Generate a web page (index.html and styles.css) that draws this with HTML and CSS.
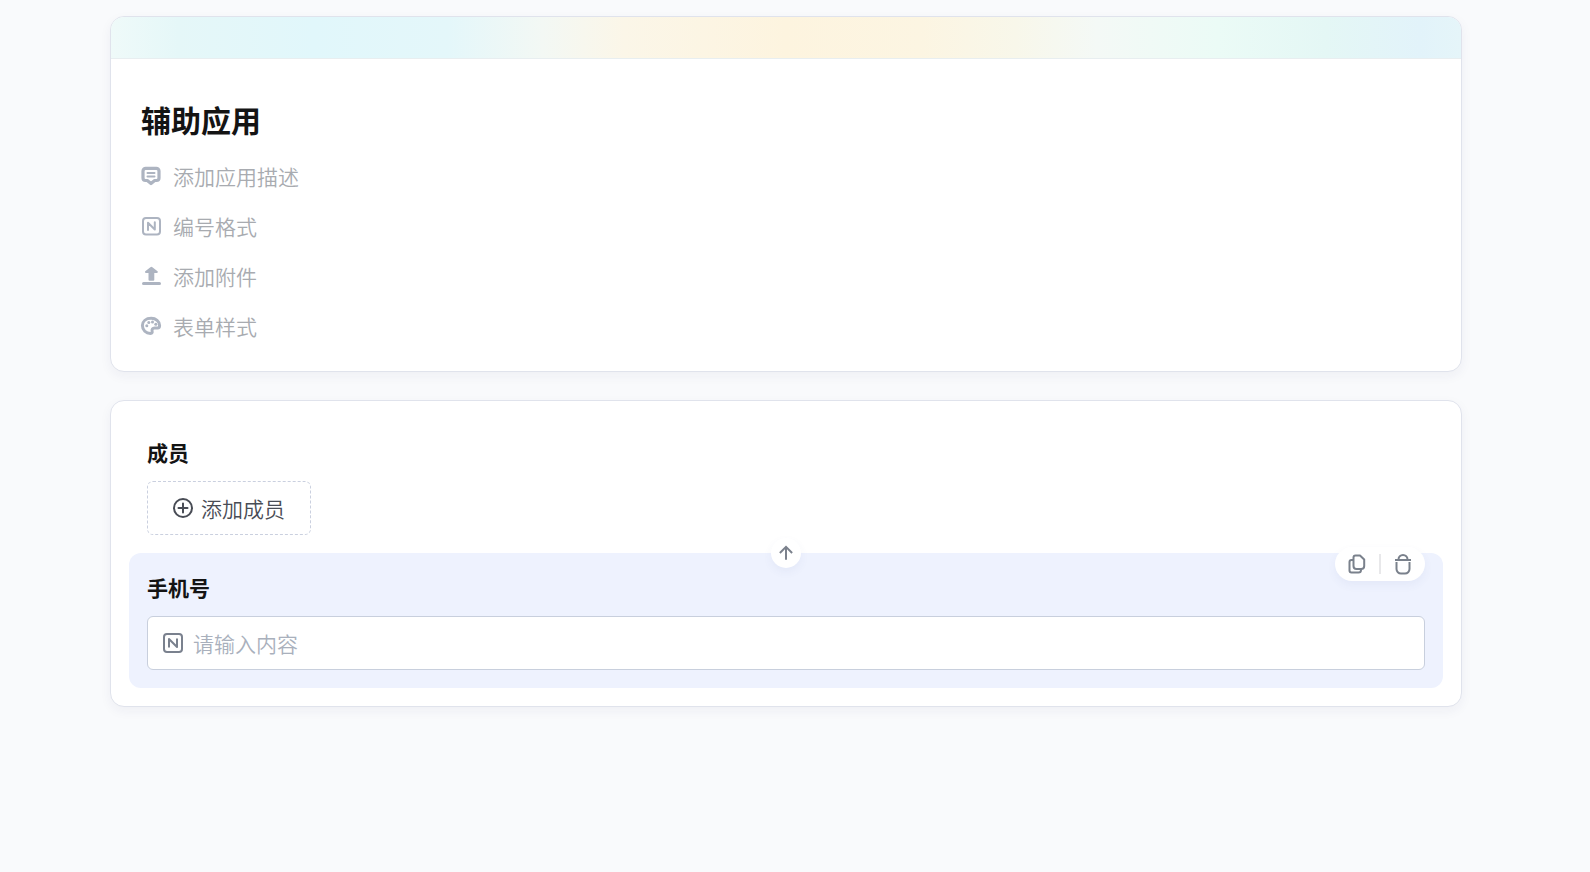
FILE: index.html
```html
<!DOCTYPE html>
<html lang="zh-CN">
<head>
  <meta charset="UTF-8" />
  <title>辅助应用</title>
  <link rel="stylesheet" href="styles.css">
</head>
<body>

  <main class="page">
    <section class="card">
      <div class="banner"></div>
      <div class="app-info">
        <h1>辅助应用</h1>
        <button type="button" class="option">
          <svg class="icon" viewBox="0 0 20 20">
            <path d="M5 2.300h10A2.700 2.700 0 0 1 18 5v7a2.500 2.500 0 0 1-2.500 2.500h-1.800L10 17.500l-3.700-3H4.500A2.500 2.500 0 0 1 2 12V5a2.700 2.700 0 0 1 3-2.700z" fill="none" stroke="currentColor" stroke-width="3.200" stroke-linejoin="round"/>
            <path d="M6.500 7h7M6.500 10.500h7" stroke="currentColor" stroke-width="2" stroke-linecap="round"/>
          </svg>
          添加应用描述
        </button>
        <button type="button" class="option">
          <svg class="icon" viewBox="0 0 20 20" fill="none" stroke="currentColor" stroke-width="2" stroke-linejoin="round">
            <rect x="2" y="2" width="17" height="16.500" rx="3"/>
            <path d="M7 14V6.800l6.800 6.700V6.300" stroke-linecap="round"/>
          </svg>
          编号格式
        </button>
        <button type="button" class="option">
          <svg class="icon" viewBox="0 0 20 20" fill="currentColor">
            <path d="M9.400 1.200a1.600 1.600 0 0 1 2 0l4.800 3.800a1 1 0 0 1-.6 1.900h-2.300v6.800a1 1 0 0 1-1 1H8.500a1 1 0 0 1-1-1V6.900H5.200A1 1 0 0 1 4.600 5z"/>
            <rect x="1" y="16" width="19" height="3" rx="1.500"/>
          </svg>
          添加附件
        </button>
        <button type="button" class="option">
          <svg class="icon" viewBox="0 0 20 20">
            <path d="M10.200 2.300C5 2.300 1.400 5.300 1.400 9.600c0 4.600 3.700 7.900 8 7.900 2 0 1.900-1.300 1.700-2.200-.4-2 .5-3.300 2.500-3.300h3c1.400 0 2-.9 2-2.400 0-4.300-3.800-7.300-8.400-7.300z" fill="none" stroke="currentColor" stroke-width="3" stroke-linejoin="round"/>
            <g fill="currentColor">
              <circle cx="5.800" cy="9.800" r="1.500"/>
              <circle cx="7.800" cy="6.500" r="1.500"/>
              <circle cx="11.500" cy="6" r="1.500"/>
              <circle cx="14.800" cy="8.300" r="1.500"/>
            </g>
          </svg>
          表单样式
        </button>
      </div>
    </section>

    <section class="card form">
      <div class="field">
        <h2 class="field-name">成员</h2>
        <button type="button" class="add-member">
          <svg class="icon" viewBox="0 0 20 20" fill="none" stroke="currentColor" stroke-width="2">
            <circle cx="10" cy="10" r="9"/>
            <path d="M10 5.500v9M5.500 10h9" stroke-linecap="round"/>
          </svg>
          添加成员
        </button>
      </div>

      <div class="field active">
        <button type="button" class="move-up" aria-label="上移">
          <svg class="icon" viewBox="0 0 20 20" fill="none" stroke="currentColor" stroke-width="2.200">
            <path d="M10 17.500V3.500M3.200 10L10 3.200l6.800 6.800"/>
          </svg>
        </button>
        <div class="tools">
          <button type="button" aria-label="复制">
            <svg class="icon" viewBox="0 0 20 20" fill="none" stroke="currentColor" stroke-width="2" stroke-linejoin="round">
              <path d="M8.500 1.500H13l4.200 4V12a3 3 0 0 1-3 3H9.500a3 3 0 0 1-3-3V3.500a2 2 0 0 1 2-2z"/>
              <path d="M6.500 6H4.500a2 2 0 0 0-2 2v8.500a2 2 0 0 0 2 2h7a2.500 2.500 0 0 0 2.500-2.500v-1"/>
            </svg>
          </button>
          <span class="divider"></span>
          <button type="button" aria-label="删除">
            <svg class="icon" viewBox="0 0 20 20" fill="none" stroke="currentColor" stroke-width="2">
              <path d="M2 6h16M5.500 5.500a4.500 4.500 0 0 1 9 0M3.500 8v7a4.500 4.500 0 0 0 4.500 4.500h4a4.500 4.500 0 0 0 4.500-4.500V8"/>
            </svg>
          </button>
        </div>
        <label class="field-name" for="phone">手机号</label>
        <div class="input-box">
          <svg class="icon" viewBox="0 0 20 20" fill="none" stroke="currentColor" stroke-width="2" stroke-linejoin="round">
            <rect x="1" y="1" width="18" height="18" rx="3"/>
            <path d="M6 14.500V6l8 8V5.500"/>
          </svg>
          <input type="text" id="phone" placeholder="请输入内容" />
        </div>
      </div>
    </section>
  </main>

</body>
</html>
```

FILE: styles.css
```css
* {
  box-sizing: border-box;
}
body {
  margin: 0;
  padding-right: 18px;
  background: #f9fafc;
  color: #141414;
  font-family: "Noto Sans CJK SC", sans-serif;
  font-size: 21px;
  line-height: 30px;
}
button, input {
  font: inherit;
  color: inherit;
  background: none;
  border: none;
  padding: 0;
}
button {
  cursor: pointer;
}
.page {
  width: 86%;
  margin: 0 auto;
  padding: 16px 0;
}
.card {
  background: #fff;
  border: 1px solid #e0e3ec;
  border-radius: 14px;
  box-shadow: 0 4px 12px rgba(30, 40, 90, 0.05);
  margin-bottom: 28px;
}
.icon {
  width: 20px;
  height: 20px;
  flex: none;
  display: block;
  overflow: visible;
}
.banner {
  height: 42px;
  border-bottom: 1px solid #e8eef0;
  border-radius: 13px 13px 0 0;
  background: linear-gradient(90deg, #effaf9 0%, #e5f7f8 5%, #e1f7fb 15%, #e4f7fa 25%, #f3f8f4 32%, #fbf6e8 38%, #fdf4df 50%, #fcf5e2 60%, #f8f7ea 67%, #f4f9f6 73%, #ebfbf6 82%, #e4f7f5 90%, #e2f3fa 97%, #e5f5f9 100%);
}
.app-info {
  display: flex;
  flex-direction: column;
  align-items: flex-start;
  gap: 20px;
  padding: 38px 30px 30px;
}
h1 {
  margin: 0;
  font-size: 30px;
  line-height: 44px;
  font-weight: bold;
}
.option {
  display: flex;
  align-items: center;
  gap: 12px;
  color: #a8abb0;
  font-weight: 350;
}
.option .icon {
  color: #adb4c1;
}
.form {
  padding: 18px;
}
.field {
  position: relative;
  padding: 18px;
}
.field-name {
  display: block;
  margin: 0 0 14px;
  font-size: 21px;
  line-height: 30px;
  font-weight: bold;
}
.add-member {
  display: flex;
  align-items: center;
  gap: 8px;
  height: 54px;
  padding: 0 25px;
  border: 1px dashed #cad0df;
  border-radius: 6px;
  color: #484c55;
  font-weight: 350;
}
.active {
  padding-top: 19px;
  background: #eef2fe;
  border-radius: 12px;
}
.input-box {
  display: flex;
  align-items: center;
  gap: 10px;
  height: 54px;
  padding: 0 15px;
  background: #fff;
  border: 1px solid #c8cfdd;
  border-radius: 6px;
  color: #7a818e;
}
.input-box input {
  flex: 1;
  outline: none;
  font-weight: 350;
}
.input-box input::placeholder {
  color: #a9b0bc;
}
.move-up {
  position: absolute;
  top: -15px;
  left: 50%;
  margin-left: -15px;
  width: 30px;
  height: 30px;
  display: flex;
  align-items: center;
  justify-content: center;
  background: #fff;
  border-radius: 50%;
  box-shadow: 0 4px 10px rgba(60, 80, 160, 0.06);
  color: #7b818c;
}
.move-up .icon {
  width: 18px;
  height: 18px;
}
.tools {
  position: absolute;
  top: -6px;
  right: 18px;
  height: 34px;
  padding: 0 12px;
  display: flex;
  align-items: center;
  gap: 12px;
  background: #fff;
  border-radius: 17px;
  box-shadow: 0 4px 10px rgba(60, 80, 160, 0.06);
  color: #7a818c;
}
.divider {
  width: 2px;
  height: 20px;
  background: #e8e8ea;
}
```
